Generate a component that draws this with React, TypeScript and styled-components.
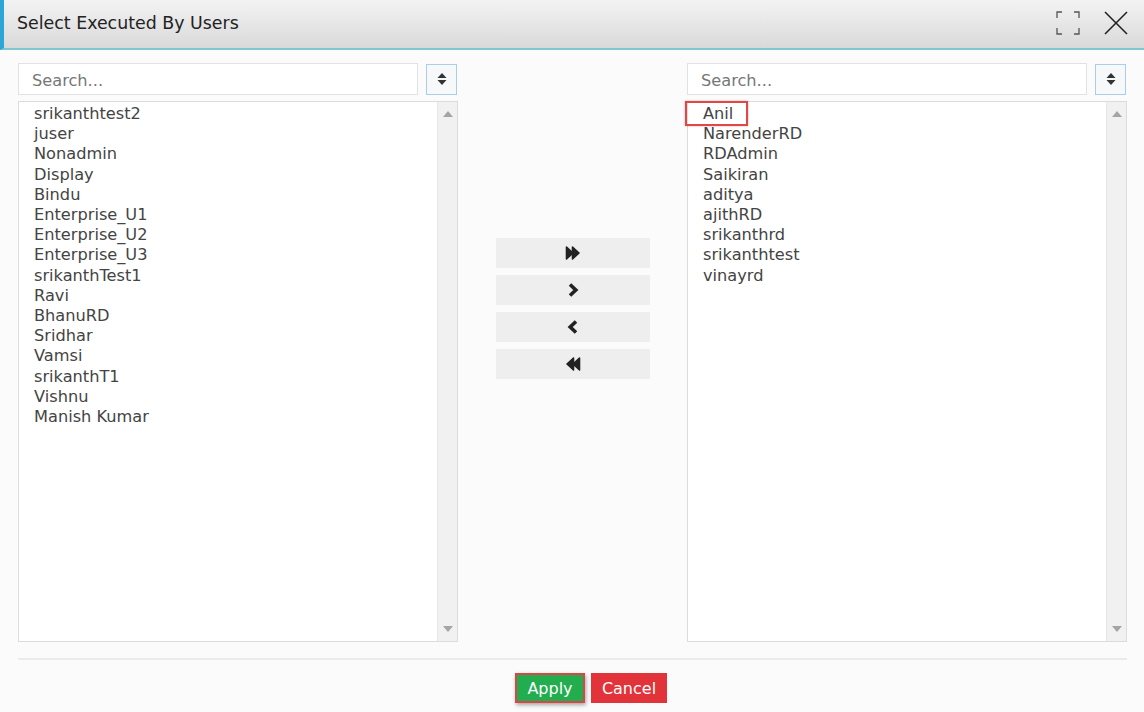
import React from "react";
import styled, { createGlobalStyle } from "styled-components";

const FONT = `"DejaVu Sans", Verdana, sans-serif`;

const Global = createGlobalStyle`
  html, body { margin: 0; padding: 0; background: #fbfbfb; }
  body { font-family: ${FONT}; width: 1144px; height: 712px; overflow: hidden; }
  * { box-sizing: border-box; }
`;

const Dialog = styled.div`
  width: 1144px;
  height: 712px;
  display: flex;
  flex-direction: column;
  background: #fbfbfb;
`;

const Header = styled.div`
  height: 50px;
  display: flex;
  align-items: center;
  justify-content: space-between;
  background: linear-gradient(#f3f3f3, #d9d9d9);
  border-left: 4px solid #2aa7d6;
  border-bottom: 2px solid #7fc7cf;
  padding: 0 16px 3px 13px;
`;

const Title = styled.div`
  font-family: ${FONT};
  font-size: 17.4px;
  color: #222;
`;

const HeaderIcons = styled.div`
  display: flex;
  align-items: center;
  gap: 24px;
`;

const Body = styled.div`
  flex: 1;
  display: flex;
  padding: 13px 17px 0 18px;
`;

const Panel = styled.div`
  width: 440px;
  display: flex;
  flex-direction: column;
`;

const SearchRow = styled.div`
  display: flex;
  align-items: center;
  gap: 8px;
  height: 32px;
`;

const Search = styled.input`
  width: 400px;
  height: 32px;
  border: 1px solid #e2e2e2;
  background: #fff;
  padding: 2px 13px 0;
  font-family: ${FONT};
  font-size: 16.2px;
  color: #333;
  outline: none;
  &::placeholder { color: #777; }
`;

const SortBtn = styled.div`
  width: 31px;
  height: 31px;
  border: 1px solid #a9cfe6;
  background: #f6f8fa;
  display: flex;
  align-items: center;
  justify-content: center;
`;

const ListBox = styled.div`
  margin-top: 6px;
  height: 541px;
  border: 1px solid #dcdcdc;
  background: #fff;
  display: flex;
`;

const Items = styled.div`
  flex: 1;
  padding: 2px 0 0 0;
`;

const Item = styled.div<{ $marked?: boolean }>`
  position: relative;
  font-family: ${FONT};
  font-size: 16.2px;
  line-height: 20.2px;
  color: #444;
  padding-left: 15px;
  width: fit-content;
  & > span.mark {
    display: ${(p) => (p.$marked ? "block" : "none")};
    position: absolute;
    left: -3px;
    top: -3px;
    width: 63px;
    height: 25px;
    border: 2px solid #e04848;
    box-shadow: 0 0 2px rgba(200, 50, 50, 0.4);
  }
`;

const Scrollbar = styled.div`
  width: 20px;
  background: #f1f1f1;
  border-left: 1px solid #e6e6e6;
  display: flex;
  flex-direction: column;
  justify-content: space-between;
  align-items: center;
  padding: 9px 0 9px;
`;

const Middle = styled.div`
  flex: 1;
  display: flex;
  flex-direction: column;
  align-items: center;
  padding-top: 175px;
  gap: 7px;
`;

const MoveBtn = styled.div`
  width: 154px;
  height: 30px;
  background: #eeeeee;
  display: flex;
  align-items: center;
  justify-content: center;
`;

const Footer = styled.div`
  margin: 0 17px 0 18px;
  border-top: 2px solid #ebebeb;
  height: 54px;
  display: flex;
  justify-content: center;
  align-items: flex-start;
  padding: 13px 0 0 37px;
  gap: 6px;
`;

const Btn = styled.div<{ $kind: "apply" | "cancel" }>`
  height: 30px;
  display: flex;
  align-items: center;
  justify-content: center;
  font-family: ${FONT};
  font-size: 16px;
  color: #fff;
  width: ${(p) => (p.$kind === "apply" ? "70px" : "76px")};
  background: ${(p) => (p.$kind === "apply" ? "#22ad4f" : "#e3333a")};
  border: ${(p) => (p.$kind === "apply" ? "2px solid #d84646" : "none")};
  box-shadow: ${(p) => (p.$kind === "apply" ? "1px 2px 4px rgba(0,0,0,0.35)" : "none")};
`;

const SortIcon = () => (
  <svg width="10" height="14" viewBox="0 0 10 14">
    <path d="M5 1 L9.5 6 H0.5 Z" fill="#333" />
    <path d="M5 13 L9.5 8 H0.5 Z" fill="#333" />
  </svg>
);

const ScrollUp = () => (
  <svg width="10" height="6" viewBox="0 0 10 6"><path d="M5 0 L10 6 H0 Z" fill="#a5a5a5" /></svg>
);
const ScrollDown = () => (
  <svg width="10" height="6" viewBox="0 0 10 6"><path d="M5 6 L10 0 H0 Z" fill="#a5a5a5" /></svg>
);

const Chevron = ({ dir, double }: { dir: "l" | "r"; double?: boolean }) => {
  const flip = dir === "l" ? { transform: "scaleX(-1)" } : undefined;
  if (double) {
    return (
      <svg width="16" height="14" viewBox="0 0 16 14" style={flip}>
        <path d="M1.5 1 L8 7 L1.5 13 Z" fill="#222" stroke="#222" strokeWidth="1.6" strokeLinejoin="round" />
        <path d="M7.5 1 L14 7 L7.5 13 Z" fill="#222" stroke="#222" strokeWidth="1.6" strokeLinejoin="round" />
      </svg>
    );
  }
  return (
    <svg width="12" height="16" viewBox="0 0 12 16" style={flip}>
      <path d="M3 2.5 L8.8 8 L3 13.5" fill="none" stroke="#222" strokeWidth="3.6" strokeLinejoin="miter" />
    </svg>
  );
};

const leftUsers = [
  "srikanthtest2", "juser", "Nonadmin", "Display", "Bindu", "Enterprise_U1", "Enterprise_U2",
  "Enterprise_U3", "srikanthTest1", "Ravi", "BhanuRD", "Sridhar", "Vamsi", "srikanthT1", "Vishnu", "Manish Kumar",
];
const rightUsers = ["Anil", "NarenderRD", "RDAdmin", "Saikiran", "aditya", "ajithRD", "srikanthrd", "srikanthtest", "vinayrd"];

const UserPanel = ({ users, marked }: { users: string[]; marked?: string }) => (
  <Panel>
    <SearchRow>
      <Search placeholder="Search..." />
      <SortBtn><SortIcon /></SortBtn>
    </SearchRow>
    <ListBox>
      <Items>
        {users.map((u) => (
          <Item key={u} $marked={u === marked}>
            <span className="mark" />
            {u}
          </Item>
        ))}
      </Items>
      <Scrollbar>
        <ScrollUp />
        <ScrollDown />
      </Scrollbar>
    </ListBox>
  </Panel>
);

export default function App() {
  return (
    <Dialog>
      <Global />
      <Header>
        <Title>Select Executed By Users</Title>
        <HeaderIcons>
          <svg width="24" height="24" viewBox="0 0 24 24" fill="none" stroke="#555" strokeWidth="1.3">
            <path d="M1 7 V1 H6" />
            <path d="M18 1 H23 V7" />
            <path d="M1 17 V23 H6" />
            <path d="M18 23 H23 V17" />
          </svg>
          <svg width="24" height="24" viewBox="0 0 24 24" fill="none" stroke="#222" strokeWidth="1.6">
            <path d="M1 1 L23 23" />
            <path d="M23 1 L1 23" />
          </svg>
        </HeaderIcons>
      </Header>
      <Body>
        <UserPanel users={leftUsers} />
        <Middle>
          <MoveBtn><Chevron dir="r" double /></MoveBtn>
          <MoveBtn><Chevron dir="r" /></MoveBtn>
          <MoveBtn><Chevron dir="l" /></MoveBtn>
          <MoveBtn><Chevron dir="l" double /></MoveBtn>
        </Middle>
        <UserPanel users={rightUsers} marked="Anil" />
      </Body>
      <Footer>
        <Btn $kind="apply">Apply</Btn>
        <Btn $kind="cancel">Cancel</Btn>
      </Footer>
    </Dialog>
  );
}
